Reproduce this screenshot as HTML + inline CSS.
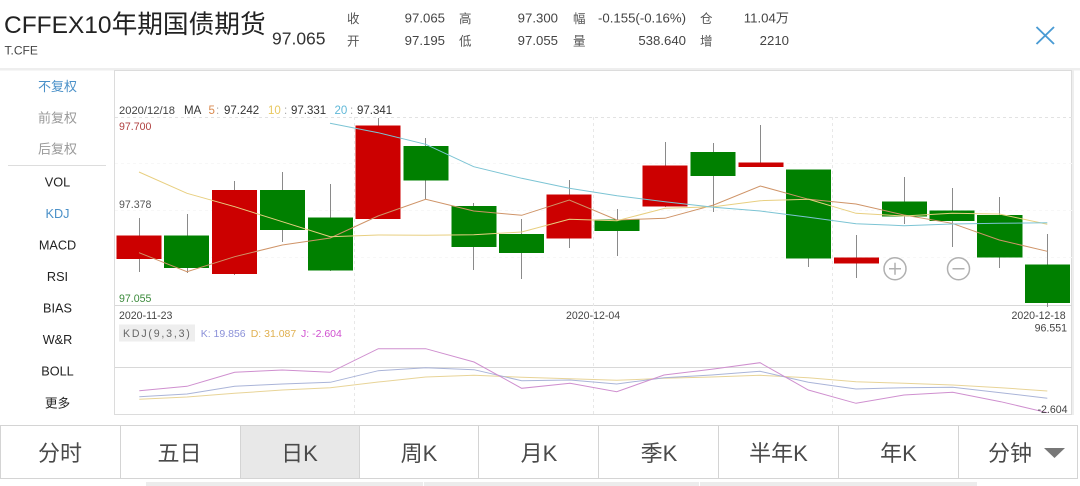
<!DOCTYPE html>
<html lang="zh"><head><meta charset="utf-8"><title>CFFEX10</title>
<style>
html,body{margin:0;padding:0;background:#fff;width:1080px;height:486px;overflow:hidden}
svg{display:block;font-family:"Liberation Sans","Noto Sans CJK SC",sans-serif;filter:blur(.3px)}
.h{font-size:13.2px;fill:#444}
.hc{font-size:12.5px;fill:#555}
.s{font-size:12.7px;fill:#222;text-anchor:middle}
.c{font-size:10.6px;fill:#444}
.t{font-size:22px;fill:#4a4a4a;text-anchor:middle}
</style></head><body>
<svg width="1080" height="486" viewBox="0 0 1080 486" xmlns="http://www.w3.org/2000/svg">
<rect width="1080" height="486" fill="#fff"/>
<!-- header -->
<text x="4" y="33" font-size="24.5" fill="#222">CFFEX10<tspan font-size="25.7">年期国债期货</tspan></text>
<text x="4.5" y="54.5" font-size="12" fill="#444">T.CFE</text>
<text x="272" y="44.5" font-size="17.5" fill="#333">97.065</text>
<g class="hc"><text class="hc" x="347" y="23">收</text><text class="hc" x="347" y="45.5">开</text><text class="hc" x="459" y="23">高</text><text class="hc" x="459" y="45.5">低</text><text class="hc" x="573" y="23">幅</text><text class="hc" x="573" y="45.5">量</text><text class="hc" x="700" y="23">仓</text><text class="hc" x="700" y="45.5">增</text></g>
<g text-anchor="end"><text class="h" x="445" y="22.5">97.065</text><text class="h" x="445" y="45">97.195</text><text class="h" x="558" y="22.5">97.300</text><text class="h" x="558" y="45">97.055</text><text class="h" x="686" y="22.5">-0.155(-0.16%)</text><text class="h" x="686" y="45">538.640</text><text class="h" x="789" y="22.5">11.04万</text><text class="h" x="789" y="45">2210</text></g>
<path d="M1036.5 27L1054 44M1054 27L1036.5 44" stroke="#4a9bd4" stroke-width="1.9" fill="none"/>
<rect x="0" y="68" width="1080" height="2.5" fill="#eeeeee"/>
<!-- sidebar -->
<text class="s" x="57.5" y="91" style="fill:#4a90c8;font-size:13px">不复权</text>
<text class="s" x="57.5" y="122.5" style="fill:#999;font-size:13px">前复权</text>
<text class="s" x="57.5" y="153.5" style="fill:#999;font-size:13px">后复权</text>
<rect x="8" y="165" width="98" height="1" fill="#ddd"/>
<text class="s" x="57.5" y="186.5">VOL</text>
<text class="s" x="57.5" y="218" style="fill:#4a90c8">KDJ</text>
<text class="s" x="57.5" y="249.5">MACD</text>
<text class="s" x="57.5" y="281">RSI</text>
<text class="s" x="57.5" y="312.5">BIAS</text>
<text class="s" x="57.5" y="344">W&amp;R</text>
<text class="s" x="57.5" y="375.5">BOLL</text>
<text class="s" x="57.5" y="407.5">更多</text>
<!-- frame -->
<rect x="114.5" y="70.5" width="957" height="344" fill="#fff" stroke="#dcdcdc"/>
<rect x="1072" y="70" width="2" height="345" fill="#eeeeee"/>
<path d="M115 305.5H1072M115 367.5H1072" stroke="#d8d8d8" fill="none"/>
<g stroke="#e2e2e2" stroke-dasharray="3 3" fill="none">
<path d="M115 117.5H1072"/>
<path d="M354.5 117V414M593.5 117V414M832.5 117V414" stroke="#e8e8e8"/>
</g>
<path d="M115 163.5H1072M115 210.5H1072M115 257.5H1072" stroke="#f7f7f7" stroke-dasharray="3 3" fill="none"/>
<!-- wicks -->
<g stroke="#8a8a8a" stroke-width="1" fill="none">
<path d="M139.5 218V272M187.5 214V273M234.5 181V275M282.5 172V242M330.5 184V271M378.5 118V219M425.5 138V199M473.5 203V270M521.5 219V279M569.5 180V248M617.5 209V256M665.5 142V207M713.5 143V212M760.5 125V167M808.5 170V267M856.5 235V278M904.5 177V224M952.5 188V247M999.5 197V268M1047.5 234V307"/>
</g>
<!-- candles -->
<g fill="#cc0000">
<rect x="116.5" y="235.5" width="45" height="23.5"/>
<rect x="212" y="190" width="45" height="84"/>
<rect x="355.5" y="125.5" width="45" height="93.5"/>
<rect x="546.5" y="194.5" width="45" height="44"/>
<rect x="642.5" y="165.5" width="45" height="41"/>
<rect x="738.5" y="162.5" width="45" height="4.5"/>
<rect x="834" y="257.5" width="45" height="6"/>
</g>
<g fill="#008000">
<rect x="164" y="235.5" width="45" height="32.5"/>
<rect x="260" y="190" width="45" height="40"/>
<rect x="308" y="217.5" width="45" height="53"/>
<rect x="403.5" y="146" width="45" height="34.5"/>
<rect x="451.5" y="206" width="45" height="41"/>
<rect x="499" y="234" width="45" height="19"/>
<rect x="594.5" y="219.5" width="45" height="11.5"/>
<rect x="690.5" y="152" width="45" height="24"/>
<rect x="786" y="169.5" width="45" height="89"/>
<rect x="882" y="201.5" width="45" height="15"/>
<rect x="929.5" y="210.5" width="45" height="10.5"/>
<rect x="977" y="215" width="45.5" height="42.5"/>
<rect x="1025" y="264.5" width="45" height="38.5"/>
</g>
<!-- MA -->
<g fill="none" stroke-width="1">
<polyline stroke="#cf9468" points="139,252.7 187,271.7 234.7,256.7 282.3,245 330.3,238 378,216 425.7,199.3 473.7,211 521.7,215.3 569.3,200 617,220 665,218.3 713.7,205 760.3,186 808.7,199.3 856,204 904,215 952,223.3 999.3,240 1047.3,251.3"/>
<polyline stroke="#e8cf80" points="139,172 187,193.3 234.7,206.7 282.3,221.7 330.3,236.7 378.3,235 425.7,235.3 473.7,234.7 521.7,232 569.3,219.3 617,220.7 665,208.3 713.7,206.7 760.3,200.7 808.7,199.3 856,213.3 904,216 952,213.3 999.3,214 1047.3,224.3"/>
<polyline stroke="#7cc4d4" points="330,123.3 378.3,132.7 425.7,144.3 473.7,166.7 521.7,178.3 569.3,188.3 617,195.7 665,201.7 713.7,207.3 760.3,211 808.7,217.3 856,223.7 904,225.7 952,224 999.3,223.3 1047.3,222.7"/>
<!-- KDJ -->
<polyline stroke="#e8d498" points="139.3,399.3 187,397 234.7,393.3 282.3,390 330.3,387.7 378.3,382 425.7,377 474,375.3 521.7,377.3 570,378.7 616.7,380.3 664,378.3 711.7,377 760,375.3 808.3,377.7 856,381.7 904,383.3 952.7,385 1000.7,387.7 1047.3,391"/>
<polyline stroke="#aab4d8" points="139.3,396.7 187,394 234.7,386.3 282.3,384 330.3,382.3 378.3,370.7 425.7,367.7 474,369.7 521.7,380.7 570,380 616.7,384 664,377.7 711.7,375 760,371.3 808.3,382.3 856,389 904,387.7 952.7,387.3 1000.7,392.7 1047.3,398.3"/>
<polyline stroke="#cf8fcf" points="139.3,390.7 187,386.3 234.7,372.3 282.3,370 330.3,372.3 378.3,348.7 425.7,348.7 474,362 521.7,388.3 570,383.3 616.7,391.7 664,375 711.7,369.3 760,362.7 808.3,390 856,403.3 904,395 952.7,392.3 1000.7,401.7 1047.3,412.7"/>
</g>
<!-- +/- -->
<g fill="none" stroke="#b0b0b0" stroke-width="1.5">
<circle cx="895" cy="268.7" r="11"/><circle cx="958.5" cy="268.7" r="11"/>
<path d="M889 268.7H901M895 262.7V274.7M952.5 268.7H964.5"/>
</g>
<!-- chart labels -->
<text class="c" x="119" y="114" style="font-size:11.2px">2020/12/18</text>
<g>
<text x="184" y="114" fill="#333" font-size="11.5">MA</text>
<text x="208.5" y="114" fill="#d98a50" font-size="11.5">5</text><text x="216" y="114" fill="#aaa" font-size="11.5">:</text>
<text x="224" y="114" fill="#333" font-size="11.5">97.242</text>
<text x="268" y="114" fill="#e8c860" font-size="11.5">10</text><text x="284" y="114" fill="#aaa" font-size="11.5">:</text>
<text x="291" y="114" fill="#333" font-size="11.5">97.331</text>
<text x="334.5" y="114" fill="#60b8d8" font-size="11.5">20</text><text x="350" y="114" fill="#aaa" font-size="11.5">:</text>
<text x="357" y="114" fill="#333" font-size="11.5">97.341</text>
</g>
<text class="c" x="119" y="130" style="fill:#b04040">97.700</text>
<text class="c" x="119" y="208" style="fill:#555">97.378</text>
<text class="c" x="119" y="302" style="fill:#3a8a3a">97.055</text>
<text class="c" x="119" y="319">2020-11-23</text>
<text class="c" x="566" y="319">2020-12-04</text>
<text class="c" x="1011.5" y="319">2020-12-18</text>
<text class="c" x="1067" y="331.5" text-anchor="end">96.551</text>
<text class="c" x="1067.5" y="413" text-anchor="end">-2.604</text>
<rect x="119" y="324.5" width="76" height="17" fill="#eeeeee"/>
<text x="123" y="337" font-size="10.6" fill="#666" letter-spacing="1.8">KDJ(9,3,3)</text>
<text x="200.7" y="337" font-size="10.5" fill="#8a90d8">K: 19.856</text>
<text x="250.7" y="337" font-size="10.5" fill="#e0b050">D: 31.087</text>
<text x="301" y="337" font-size="10.5" fill="#d050d0">J: -2.604</text>
<!-- tabs -->
<rect x="240" y="425" width="119" height="54" fill="#e8e8e8"/>
<path d="M0.5 425.5H1077.5V478.5H0.5ZM120.5 425.5V478.5M240.5 425.5V478.5M359.5 425.5V478.5M478.5 425.5V478.5M598.5 425.5V478.5M718.5 425.5V478.5M838.5 425.5V478.5M958.5 425.5V478.5" stroke="#d4d4d4" fill="none"/>
<text class="t" x="60" y="461">分时</text>
<text class="t" x="179.5" y="461">五日</text>
<text class="t" x="299.5" y="461">日K</text>
<text class="t" x="419" y="461">周K</text>
<text class="t" x="539" y="461">月K</text>
<text class="t" x="659" y="461">季K</text>
<text class="t" x="778.5" y="461">半年K</text>
<text class="t" x="898.5" y="461">年K</text>
<text class="t" x="1010" y="461">分钟</text>
<path d="M1044 448H1065L1054.5 458Z" fill="#777"/>
<rect x="146" y="482" width="277" height="4" fill="#ececec"/>
<rect x="424" y="482" width="275" height="4" fill="#ececec"/>
<rect x="700" y="482" width="277" height="4" fill="#ececec"/>
</svg>
</body></html>
